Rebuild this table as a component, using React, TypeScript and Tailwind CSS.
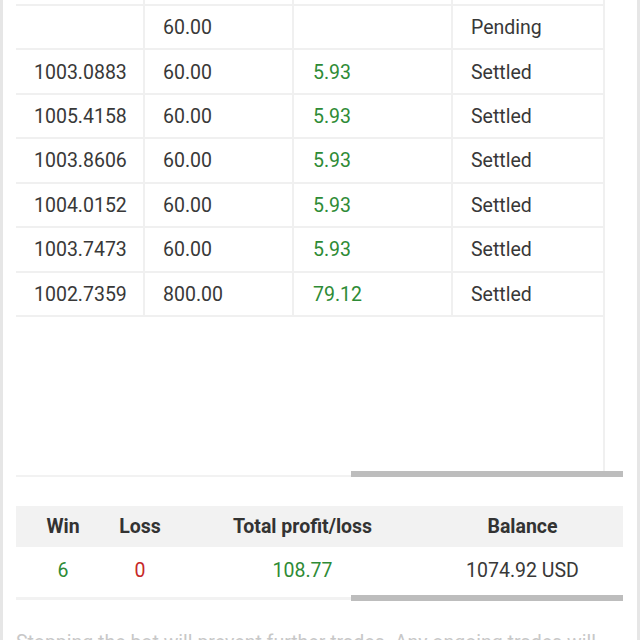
import React from "react";

const rows = [
  { a: "", b: "60.00", c: "", d: "Pending" },
  { a: "1003.0883", b: "60.00", c: "5.93", d: "Settled" },
  { a: "1005.4158", b: "60.00", c: "5.93", d: "Settled" },
  { a: "1003.8606", b: "60.00", c: "5.93", d: "Settled" },
  { a: "1004.0152", b: "60.00", c: "5.93", d: "Settled" },
  { a: "1003.7473", b: "60.00", c: "5.93", d: "Settled" },
  { a: "1002.7359", b: "800.00", c: "79.12", d: "Settled" },
];

export default function App() {
  return (
    <div
      className="w-[640px] h-[640px] overflow-hidden bg-white border-l-[3px] border-r-[3px] border-[#e6e6e6] text-[#383838]"
      style={{ fontFamily: "Roboto, 'Noto Sans', Arial, sans-serif" }}
    >
      <div className="pl-[13px] pr-[14px]">
        {/* scroll area of trades table */}
        <div className="w-[607px]">
          <div className="w-[589px] h-[471px] border-r-2 border-[#f0f0f0]">
            {/* partially visible row at the top */}
            <div className="flex h-[6px] border-b-2 border-[#f0f0f0]">
              <div className="w-[129px] border-r-2 border-[#f0f0f0]" />
              <div className="w-[149px] border-r-2 border-[#f0f0f0]" />
              <div className="w-[159px] border-r-2 border-[#f0f0f0]" />
              <div className="flex-1" />
            </div>
            {rows.map((r, i) => (
              <div
                key={i}
                className="flex h-[44.43px] border-b-2 border-[#f0f0f0] text-[19.5px]"
              >
                <div className="w-[129px] border-r-2 border-[#f0f0f0] flex items-center pl-[18px] pt-[1px]">
                  {r.a}
                </div>
                <div className="w-[149px] border-r-2 border-[#f0f0f0] flex items-center pl-[18px] pt-[1px]">
                  {r.b}
                </div>
                <div className="w-[159px] border-r-2 border-[#f0f0f0] flex items-center pl-[19px] pt-[1px] text-[#2e8b36]">
                  {r.c}
                </div>
                <div className="flex-1 flex items-center pl-[18px] pt-[1px]">{r.d}</div>
              </div>
            ))}
          </div>
          {/* horizontal scrollbar */}
          <div className="flex items-end h-[6px]">
            <div className="w-[335px] h-[2px] bg-[#f2f2f2]" />
            <div className="flex-1 h-[6px] bg-[#bdbdbd]" />
          </div>
        </div>

        {/* summary table */}
        <div className="w-[607px] mt-[29px]">
          <div className="flex h-[41px] bg-[#f2f2f2] items-center font-bold text-[19.5px] text-[#333]">
            <div className="w-[94px] text-center">Win</div>
            <div className="w-[60px] text-center">Loss</div>
            <div className="w-[265px] text-center">Total profit/loss</div>
            <div className="w-[175px] text-center">Balance</div>
          </div>
          <div className="flex h-[48px] items-center text-[19.5px]">
            <div className="w-[94px] text-center text-[#2e8b36]">6</div>
            <div className="w-[60px] text-center text-[#c62828]">0</div>
            <div className="w-[265px] text-center text-[#2e8b36]">108.77</div>
            <div className="w-[175px] text-center">1074.92 USD</div>
          </div>
          <div className="flex items-center h-[6px]">
            <div className="w-[335px] h-[3px] bg-[#f2f2f2]" />
            <div className="flex-1 h-[6px] bg-[#bdbdbd]" />
          </div>
        </div>

        <p className="mt-[28px] text-[19.5px] leading-[28px] text-[#c8c8c8] whitespace-nowrap">
          Stopping the bot will prevent further trades. Any ongoing trades will
        </p>
      </div>
    </div>
  );
}
